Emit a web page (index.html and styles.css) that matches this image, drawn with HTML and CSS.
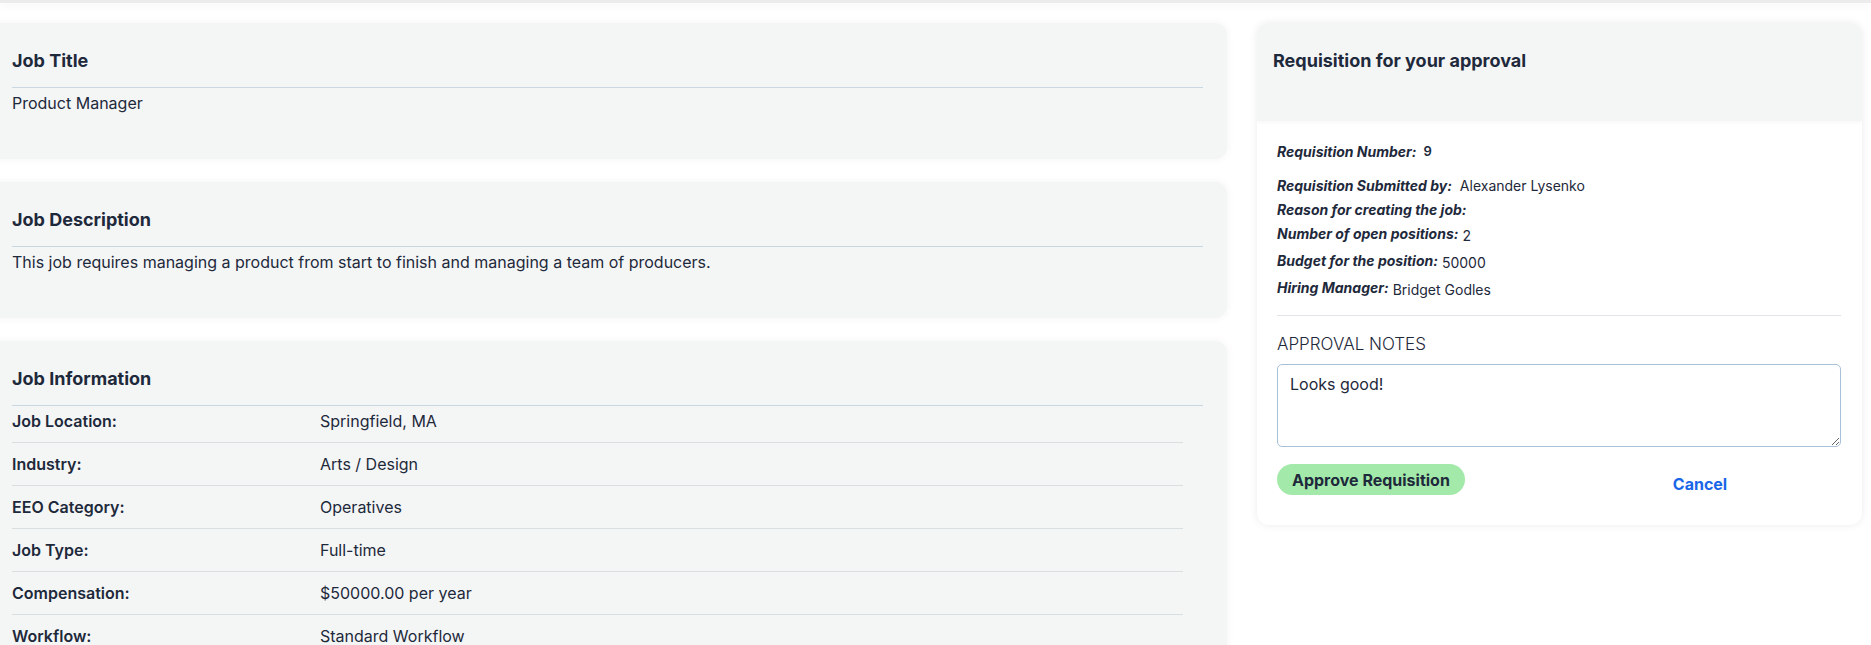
FILE: index.html
```html
<!DOCTYPE html>
<html lang="en">
<head>
<meta charset="utf-8">
<title>Requisition approval</title>
<link rel="stylesheet" href="styles.css">
</head>
<body>
<div class="topbar"></div>
<main class="page">
  <section class="left">
    <div class="card">
      <h2 class="card-title">Job Title</h2>
      <p class="card-text">Product Manager</p>
    </div>
    <div class="card">
      <h2 class="card-title">Job Description</h2>
      <p class="card-text">This job requires managing a product from start to finish and managing a team of producers.</p>
    </div>
    <div class="card">
      <h2 class="card-title">Job Information</h2>
      <div class="info">
        <div class="info-row"><span class="info-label">Job Location:</span><span class="info-value">Springfield, MA</span></div>
        <div class="info-row"><span class="info-label">Industry:</span><span class="info-value">Arts / Design</span></div>
        <div class="info-row"><span class="info-label">EEO Category:</span><span class="info-value">Operatives</span></div>
        <div class="info-row"><span class="info-label">Job Type:</span><span class="info-value">Full-time</span></div>
        <div class="info-row"><span class="info-label">Compensation:</span><span class="info-value">$50000.00 per year</span></div>
        <div class="info-row"><span class="info-label">Workflow:</span><span class="info-value">Standard Workflow</span></div>
      </div>
    </div>
  </section>
  <aside class="approval">
    <div class="approval-head">
      <h2 class="card-title plain">Requisition for your approval</h2>
    </div>
    <div class="approval-body">
      <div class="req-row first"><span class="req-label">Requisition Number:</span><span class="req-num">9</span></div>
      <div class="req-row second"><span class="req-label">Requisition Submitted by:</span><span class="req-value spaced">Alexander Lysenko</span></div>
      <div class="req-row second"><span class="req-label">Reason for creating the job:</span></div>
      <div class="req-row"><span class="req-label">Number of open positions:</span><span class="req-value">2</span></div>
      <div class="req-row"><span class="req-label">Budget for the position:</span><span class="req-value">50000</span></div>
      <div class="req-row"><span class="req-label">Hiring Manager:</span><span class="req-value">Bridget Godles</span></div>
      <hr class="sep">
      <label class="notes-label" for="notes">APPROVAL NOTES</label>
      <textarea id="notes" class="notes">Looks good!</textarea>
      <div class="actions">
        <div><button class="approve" type="button">Approve Requisition</button></div>
        <div class="cancel-cell"><a class="cancel" href="#">Cancel</a></div>
      </div>
    </div>
  </aside>
</main>
</body>
</html>
```

FILE: styles.css
```css
* { box-sizing: border-box; }
html, body { margin: 0; padding: 0; }
body {
  font-family: Inter, "Noto Sans", Arial, sans-serif;
  color: #1e293b;
  background: #ffffff;
  overflow: hidden;
  height: 645px;
}
.topbar {
  height: 3px;
  background: #ececec;
  box-shadow: 0 2px 10px rgba(0, 0, 0, 0.07);
}
.page {
  display: flex;
  align-items: flex-start;
  gap: 30px;
  padding: 20px 9px 0 0;
}
.left {
  flex: 1;
  margin-left: -12px;
  display: flex;
  flex-direction: column;
  gap: 23px;
}
.card {
  background: #f4f6f6;
  border-radius: 12px;
  padding: 24px;
  box-shadow: 0 0 8px rgba(0, 0, 0, 0.05);
}
.card-title {
  margin: 0;
  font-size: 18px;
  line-height: 27px;
  font-weight: 700;
  padding-bottom: 13px;
  border-bottom: 1px solid #cbd7e0;
}
.card-title.plain { border-bottom: none; padding-bottom: 0; }
.card-text {
  margin: 3px 0 20px;
  font-size: 16px;
  line-height: 24px;
}
.info { margin-right: 20px; }
.info-row {
  display: flex;
  padding: 12px 0 11px;
  border-bottom: 1px solid #d9dee1;
  font-size: 16px;
  line-height: 19px;
}
.info-row:first-child { padding-top: 6px; }
.info-label { width: 308px; font-weight: 600; }
.info-value { font-weight: 400; }

.approval {
  width: 605px;
  flex: none;
  background: #ffffff;
  border-radius: 12px;
  box-shadow: 0 0 8px rgba(0, 0, 0, 0.08);
  overflow: hidden;
}
.approval-head {
  background: #f4f6f6;
  padding: 24px 16px 47px;
  box-shadow: 0 2px 4px rgba(0, 0, 0, 0.03);
}
.approval-body {
  padding: 20px 21px 20px 20px;
}
.req-row {
  display: flex;
  align-items: flex-start;
  font-size: 14px;
  line-height: 21px;
  margin-bottom: 4px;
}
.req-row.first { margin-bottom: 13px; }
.req-row.second { margin-bottom: 3px; }
.req-label { font-weight: 700; font-style: italic; }
.req-num { margin-left: 7px; font-size: 13px; font-weight: 600; }
.req-value { margin-left: 4px; padding-top: 2px; }
.req-value.spaced { margin-left: 8px; padding-top: 0; }
.sep {
  border: none;
  border-top: 1px solid #e1e4e6;
  margin: 15px 0 16px;
}
.notes-label {
  display: block;
  font-size: 17px;
  font-weight: 300;
  line-height: 24px;
  margin-bottom: 8px;
}
.notes {
  display: block;
  width: 100%;
  height: 83px;
  border: 1px solid #a9c1d8;
  border-radius: 5px;
  padding: 8px 12px;
  font-family: inherit;
  font-size: 16px;
  line-height: 22px;
  color: #1e293b;
  resize: vertical;
}
.actions {
  display: grid;
  grid-template-columns: 1fr 1fr;
  margin-top: 17px;
  margin-bottom: 10px;
}
.approve {
  height: 31px;
  padding: 0 15px;
  border: none;
  border-radius: 16px;
  background: #a3e9a9;
  color: #1e293b;
  font-family: inherit;
  font-size: 16px;
  font-weight: 700;
  cursor: pointer;
}
.cancel-cell { text-align: center; padding-top: 9px; }
.cancel {
  color: #1a66e8;
  font-size: 16px;
  font-weight: 700;
  line-height: 22px;
  text-decoration: none;
}
```
